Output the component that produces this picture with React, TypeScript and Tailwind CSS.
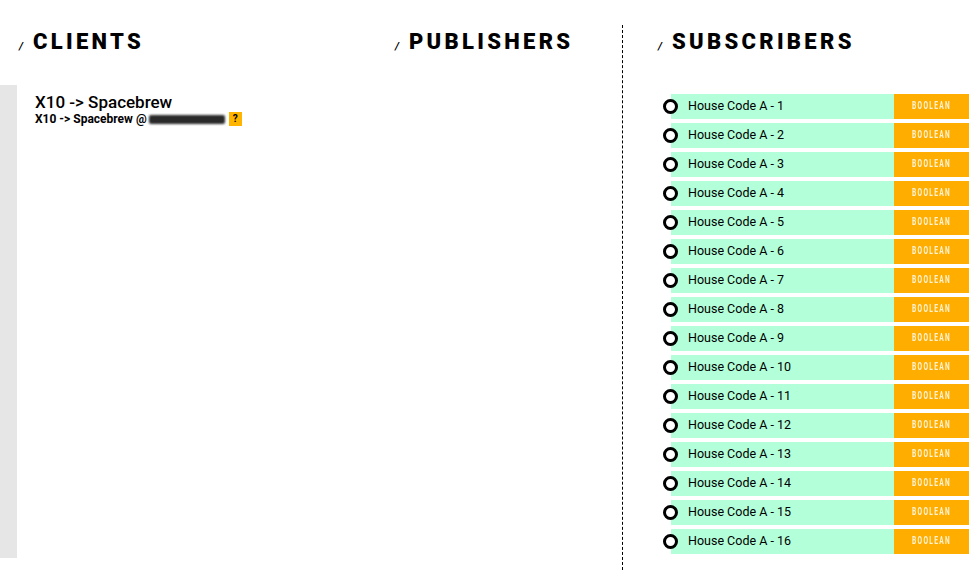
const SUBS = Array.from({ length: 16 }, (_, i) => `House Code A - ${i + 1}`);

function Heading({ label }: { label: string }) {
  return (
    <h2 className="flex items-end gap-[10px] leading-none">
      <span className="mb-[1px] text-[11px] font-bold italic">/</span>
      <span className="text-[22px] font-black tracking-[0.15em]">{label}</span>
    </h2>
  );
}

export default function App() {
  return (
    <div
      className="flex h-[570px] w-[980px] overflow-hidden bg-white text-black"
      style={{ fontFamily: 'Roboto, "DejaVu Sans", sans-serif' }}
    >
      {/* clients */}
      <div className="flex w-[376px] shrink-0 flex-col">
        <div className="pl-[19px] pt-[31px]">
          <Heading label="CLIENTS" />
        </div>
        <div className="mt-[32px] flex h-[473px]">
          <div className="w-[17px] shrink-0 bg-[#e6e6e6]" />
          <div className="pl-[18px] pt-[8px]">
            <p className="text-[17px] font-medium leading-[18px]">X10 -&gt; Spacebrew</p>
            <p className="mt-[1px] flex items-center text-[12px] font-bold leading-[14px]">
              X10 -&gt; Spacebrew @
              <span className="ml-[2px] inline-block h-[9px] w-[76px] rounded-[2px] bg-[#2a2a2a] blur-[1px]" />
              <span className="ml-[4px] grid h-[14px] w-[13px] place-items-center bg-[#ffb400] text-[10px] font-bold">?</span>
            </p>
          </div>
        </div>
      </div>

      {/* publishers */}
      <div className="w-[246px] shrink-0 pl-[19px] pt-[31px]">
        <Heading label="PUBLISHERS" />
      </div>

      {/* subscribers */}
      <div className="mt-[25px] flex-1 border-l border-dashed border-black">
        <div className="pl-[35px] pt-[6px]">
          <Heading label="SUBSCRIBERS" />
        </div>
        <ul className="mt-[41px] flex flex-col gap-[4px] pl-[48px]">
          {SUBS.map((s) => (
            <li key={s} className="relative flex h-[25px] w-[298px]">
              <span className="absolute left-[-8px] top-[5px] h-[15px] w-[15px] rounded-full border-[3px] border-black bg-white" />
              <div className="flex flex-1 items-center bg-[#b3ffd9] pl-[17px] text-[12.5px]">{s}</div>
              <div className="flex w-[75px] items-center justify-center bg-[#ffae00] text-[#fff3d6]">
                <span className="inline-block scale-x-[0.6] text-[11px] font-bold tracking-[0.2em]">BOOLEAN</span>
              </div>
            </li>
          ))}
        </ul>
      </div>
    </div>
  );
}
